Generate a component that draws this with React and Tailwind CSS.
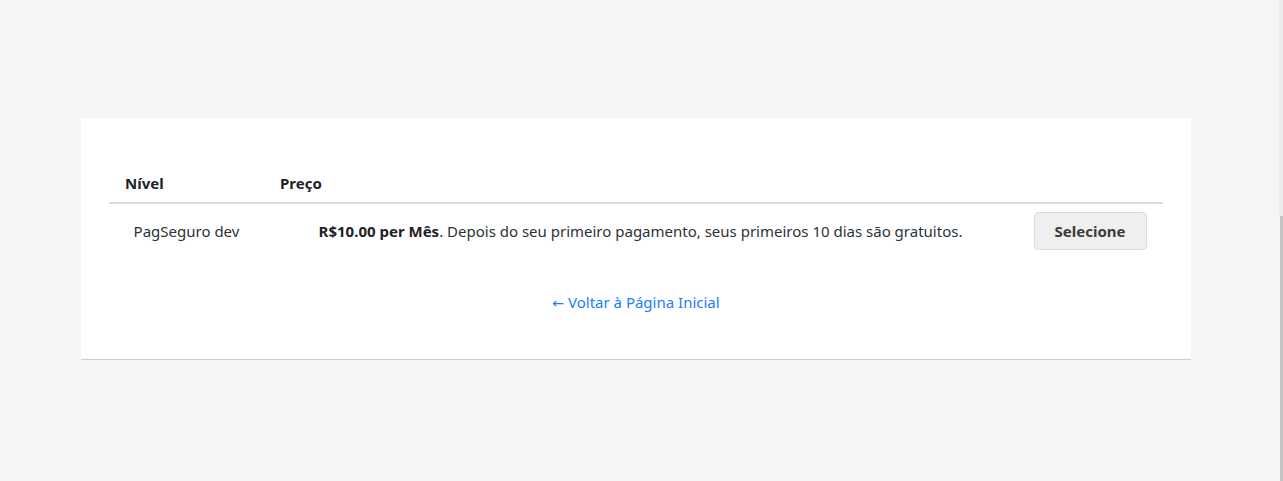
import React from 'react';

const FONT = { fontFamily: '"Noto Sans", "Open Sans", Arial, sans-serif' };

function PlanRow({ name, price, note }) {
  return (
    <tr>
      <td className="py-2 text-center text-[15px] text-[#2c3338]">{name}</td>
      <td className="py-2 text-center text-[15px] text-[#2c3338]">
        <strong className="font-bold text-[#1d2327]">{price}</strong>. {note}
      </td>
      <td className="py-2 text-center">
        <button className="h-[38px] w-[113px] rounded-[4px] border border-[#dcdcde] bg-[#efefef] text-[15px] font-bold text-[#3c3c3c]">
          Selecione
        </button>
      </td>
    </tr>
  );
}

export default function App() {
  return (
    <div className="relative min-h-screen bg-[#f5f5f5]" style={FONT}>
      <div className="pt-[118px] pl-[81px]">
        <div className="w-[1110px] bg-white border-b border-[#cfcfcf] px-[28px] pt-[46px] pb-[46px]">
          <table className="w-[1054px] table-fixed border-collapse">
            <colgroup>
              <col className="w-[155px]" />
              <col className="w-[753px]" />
              <col className="w-[146px]" />
            </colgroup>
            <thead>
              <tr className="border-b-2 border-[#dcdcde]">
                <th className="px-4 py-[9px] text-left text-[15px] font-bold leading-5 text-[#1d2327]">Nível</th>
                <th className="px-4 py-[9px] text-left text-[15px] font-bold leading-5 text-[#1d2327]">Preço</th>
                <th className="px-4 py-[9px]"></th>
              </tr>
            </thead>
            <tbody>
              <PlanRow
                name="PagSeguro dev"
                price="R$10.00 per Mês"
                note="Depois do seu primeiro pagamento, seus primeiros 10 dias são gratuitos."
              />
            </tbody>
          </table>
          <div className="mt-[34px] text-center text-[15px] leading-5">
            <a href="#" className="text-[#1a7cff]">
              <span className="font-['DejaVu_Sans'] text-[14px]">←</span> Voltar à Página Inicial
            </a>
          </div>
        </div>
      </div>
      <div className="absolute right-0 top-0 h-[216px] w-[4px] bg-[#ececec]" />
      <div className="absolute right-0 top-[216px] bottom-0 w-[3px] bg-[#c4c4c4]" />
    </div>
  );
}
